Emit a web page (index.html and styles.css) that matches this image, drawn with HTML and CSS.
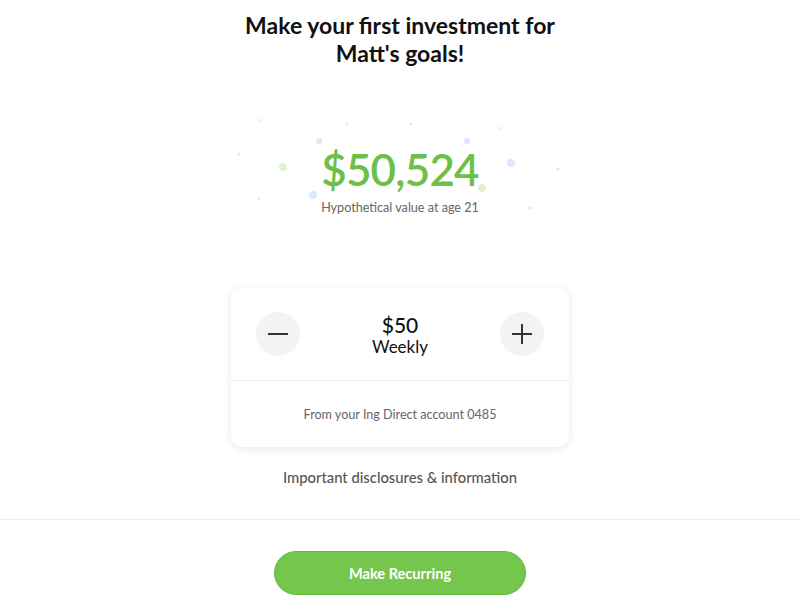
FILE: index.html
```html
<!DOCTYPE html>
<html>
<head>
<meta charset="utf-8">
<link rel="stylesheet" href="styles.css">
</head>
<body>
<h1 class="title">Make your first investment for<br>Matt's goals!</h1>
<section class="hero">
  <span class="dot g s" style="left:259px;top:120px"></span>
  <span class="dot g s" style="left:347px;top:124px"></span>
  <span class="dot b m" style="left:319px;top:141px"></span>
  <span class="dot b s" style="left:239px;top:154px"></span>
  <span class="dot g l" style="left:283px;top:167px"></span>
  <span class="dot b l" style="left:313px;top:195px"></span>
  <span class="dot g s" style="left:259px;top:199px"></span>
  <span class="dot b s" style="left:411px;top:124px"></span>
  <span class="dot g s" style="left:501px;top:128px"></span>
  <span class="dot b m" style="left:467px;top:141px"></span>
  <span class="dot b l" style="left:511px;top:163px"></span>
  <span class="dot b s" style="left:558px;top:169px"></span>
  <span class="dot g l" style="left:482px;top:188px"></span>
  <span class="dot b s" style="left:530px;top:208px"></span>
  <div class="amount">$50,524</div>
  <div class="caption">Hypothetical value at age 21</div>
</section>
<div class="card">
  <div class="card-top">
    <button class="circle" aria-label="decrease"><span class="bar"></span></button>
    <div class="value">
      <div class="price">$50</div>
      <div class="freq">Weekly</div>
    </div>
    <button class="circle" aria-label="increase"><span class="bar"></span><span class="bar vert"></span></button>
  </div>
  <div class="card-bottom">From your Ing Direct account 0485</div>
</div>
<div class="disclosures">Important disclosures &amp; information</div>
<div class="footer">
  <button class="cta">Make Recurring</button>
</div>
</body>
</html>
```
FILE: styles.css
```css
html, body { margin: 0; padding: 0; background: #fff; }
body {
  font-family: Lato, "Noto Sans", sans-serif;
  color: #111;
  position: relative;
  height: 607px;
  overflow: hidden;
}
.title {
  margin: 0;
  padding-top: 11px;
  font-size: 23px;
  line-height: 28px;
  font-weight: 700;
  text-align: center;
  color: #111;
}
.hero {
  height: 221px;
  text-align: center;
  padding-top: 80px;
  box-sizing: border-box;
}
.dot {
  position: absolute;
  border-radius: 50%;
  transform: translate(-50%, -50%);
}
.dot.g { background: #dff2d6; }
.dot.b { background: #d9e8fb; }
.dot.s { width: 3px; height: 3px; }
.dot.m { width: 6px; height: 6px; }
.dot.l { width: 8px; height: 8px; }
.dot.g.s { background: #e3f3dc; }
.dot.b.s { background: #dbe7f7; }
.amount {
  font-size: 44px;
  line-height: 44px;
  font-weight: 600;
  color: #6cc04a;
  letter-spacing: -0.8px;
}
.caption {
  margin-top: 9px;
  font-size: 12.6px;
  line-height: 16px;
  color: #666;
}
.card {
  width: 338px;
  margin: 0 auto;
  border-radius: 10px;
  background: #fff;
  box-shadow: 0 2px 10px rgba(0,0,0,0.09), 0 0 2px rgba(0,0,0,0.04);
}
.card-top {
  height: 92px;
  display: flex;
  align-items: center;
  justify-content: space-between;
  padding: 0 25px;
  border-bottom: 1px solid #efefef;
}
.circle {
  width: 44px;
  height: 44px;
  border: 0;
  border-radius: 50%;
  background: #f3f3f3;
  padding: 0;
  position: relative;
}
.bar {
  position: absolute;
  left: 12px;
  top: 21px;
  width: 20px;
  height: 2px;
  background: #333;
}
.bar.vert {
  left: 21px;
  top: 12px;
  width: 2px;
  height: 20px;
}
.value { text-align: center; margin-top: 3px; }
.price { font-size: 21px; line-height: 22px; font-weight: 500; color: #111; }
.freq { font-size: 17px; line-height: 21px; color: #111; }
.card-bottom {
  height: 66px;
  display: flex;
  align-items: center;
  justify-content: center;
  font-size: 12.6px;
  color: #666;
}
.disclosures {
  margin-top: 21px;
  text-align: center;
  font-size: 14.8px;
  line-height: 18px;
  color: #555;
  font-weight: 500;
}
.footer {
  margin-top: 33px;
  border-top: 1px solid #eee;
  padding-top: 31px;
  text-align: center;
}
.cta {
  width: 252px;
  height: 44px;
  border-radius: 22px;
  border: 1px solid #66bb3f;
  background: #74c64d;
  color: #fff;
  font-family: Lato, "Noto Sans", sans-serif;
  font-weight: 700;
  font-size: 14.6px;
}
```
